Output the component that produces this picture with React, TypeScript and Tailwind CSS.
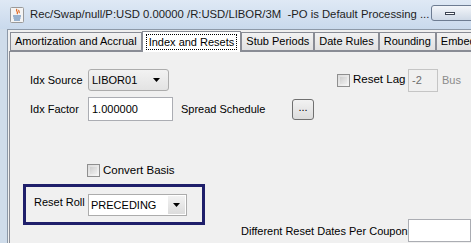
import type { ReactNode } from "react";

function Combo({ value, className }: { value: string; className: string }) {
	return (
		<div
			className={`flex items-center justify-between rounded-[3px] border border-[#acacac] bg-gradient-to-b from-[#f2f2f2] to-[#e3e3e3] pl-[3px] pr-[8px] ${className}`}
		>
			<span>{value}</span>
			<svg width="7" height="4" viewBox="0 0 7 4">
				<path d="M0 0h7L3.5 4z" fill="#000" />
			</svg>
		</div>
	);
}

function Check({ label }: { label: string }) {
	return (
		<div className="flex items-center gap-[3px] whitespace-nowrap">
			<div className="h-[13px] w-[13px] shrink-0 border border-[#8f8f8f] bg-gradient-to-br from-[#dcdcdc] to-[#f6f6f6] p-[2px]">
				<div className="h-full w-full bg-gradient-to-br from-[#cfcfcf] to-[#eeeeee]" />
			</div>
			<span className="text-[11.5px]">{label}</span>
		</div>
	);
}

function Tab({ children, active }: { children: ReactNode; active?: boolean }) {
	if (active) {
		return (
			<div className="z-10 -mx-[2px] mb-[-1px] flex h-[21px] shrink-0 items-center whitespace-nowrap border border-b-0 border-[#898c95] bg-white px-[3px]">
				<span className="border border-dotted border-black px-[2px] leading-[14px]">{children}</span>
			</div>
		);
	}
	return (
		<div className="mt-[2px] flex h-[19px] shrink-0 items-center whitespace-nowrap border border-[#898c95] bg-gradient-to-b from-[#f2f2f2] to-[#e1e1e1] px-[4px]">
			{children}
		</div>
	);
}

export default function App() {
	return (
		<div
			className="relative h-[243px] w-[471px] overflow-hidden bg-[#cfdcea] text-[11px] text-black"
			style={{ fontFamily: "'Liberation Sans', Arial, sans-serif" }}
		>
			{/* title bar */}
			<div className="flex h-[29px] items-center bg-gradient-to-b from-[#dfe9f5] to-[#c9d9ec] pl-[10px]">
				<svg width="14" height="16" viewBox="0 0 14 16" className="mr-[6px]">
					<rect x="0.5" y="0.5" width="13" height="15" rx="1" fill="#f4f4f4" stroke="#9a9a9a" />
					<path d="M7 2c-2 2 2 3 0 5M9 3c-1 1 1 2 0 3" stroke="#e0641c" strokeWidth="1.2" fill="none" />
					<path d="M3 9h8M3.5 11h7M4 13h6" stroke="#3a6ea8" strokeWidth="1" />
				</svg>
				<span className="whitespace-pre text-[11.3px] text-[#1e1e1e]">
					Rec/Swap/null/P:USD 0.00000 /R:USD/LIBOR/3M  -PO is Default Processing ...
				</span>
				<div className="absolute right-[-10px] top-[5px] flex h-[16px] w-[50px] items-center rounded-[3px] border border-[#6d7c92] bg-gradient-to-b from-[#f3f6fa] to-[#cfd9e6] pl-[13px]">
					<div className="h-[3px] w-[10px] border border-[#3c4452] bg-white" />
				</div>
			</div>

			{/* window body */}
			<div className="ml-[7px] flex h-[214px] flex-col border-l border-t border-[#8d99a8] bg-[#f0f0f0]">
				<div className="flex h-[21px] items-end pl-[2px] pt-[1px]">
					<Tab>Amortization and Accrual</Tab>
					<div className="w-[2px] shrink-0" />
					<Tab active>Index and Resets</Tab>
					<div className="w-[2px] shrink-0" />
					<Tab>Stub Periods</Tab>
					<Tab>Date Rules</Tab>
					<Tab>Rounding</Tab>
					<Tab>Embedded</Tab>
				</div>
				<div className="ml-[1px] flex flex-1 flex-col border-l border-t border-[#898c95] bg-[#f0f0f0]">
					<div className="mt-[16px] flex h-[24px] items-center">
						<span className="ml-[20px] w-[58px]">Idx Source</span>
						<Combo value="LIBOR01" className="h-[22px] w-[81px]" />
						<div className="ml-[168px] w-[71px]">
							<Check label="Reset Lag" />
						</div>
						<div className="flex h-[23px] w-[30px] items-center border border-[#c5c5c5] bg-[#f0f0f0] pl-[3px] text-[#6d6d6d]">
							-2
						</div>
						<span className="ml-[4px] text-[#8b8b8b]">Bus</span>
					</div>
					<div className="mt-[4px] flex h-[26px] items-center">
						<span className="ml-[20px] w-[58px]">Idx Factor</span>
						<div className="flex h-[24px] w-[85px] items-center border border-[#abadb3] bg-white pl-[3px]">1.000000</div>
						<span className="ml-[8px] w-[111px]">Spread Schedule</span>
						<div className="flex h-[21px] w-[22px] items-center justify-center rounded-[3px] border border-[#707070] bg-gradient-to-b from-[#f2f2f2] to-[#dcdcdc] pb-[4px] text-[11px]">
							...
						</div>
					</div>
					<div className="ml-[77px] mt-[40px]">
						<Check label="Convert Basis" />
					</div>
					<div className="mt-[5px] flex items-start">
						<div className="ml-[13px] flex h-[41px] w-[182px] shrink-0 items-center border-[3px] border-[#1f1f6b]">
							<span className="ml-[8px] mt-[-6px] w-[54px] whitespace-nowrap">Reset Roll</span>
							<div className="flex h-[22px] w-[99px] items-center justify-between border border-[#acacac] bg-white pl-[2px] pr-[1px]">
								<span>PRECEDING</span>
								<div className="flex h-[18px] w-[17px] items-center justify-center bg-gradient-to-b from-[#f2f2f2] to-[#dcdcdc]">
									<svg width="7" height="4" viewBox="0 0 7 4">
										<path d="M0 0h7L3.5 4z" fill="#000" />
									</svg>
								</div>
							</div>
						</div>
						<div className="ml-[36px] mt-[35px] flex flex-1 items-center">
							<span className="w-[167px] whitespace-nowrap">Different Reset Dates Per Coupon</span>
							<div className="h-[23px] flex-1 border border-[#abadb3] bg-white" />
						</div>
					</div>
				</div>
			</div>
		</div>
	);
}
